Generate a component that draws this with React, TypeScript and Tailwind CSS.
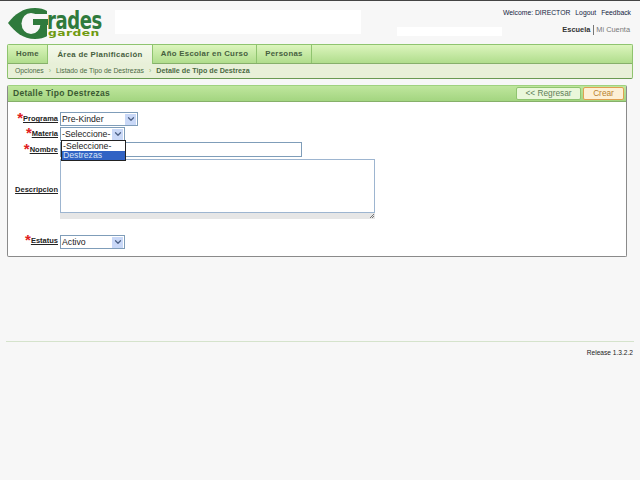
import { ChevronDown } from 'lucide-react'

const tabs = [
  { label: 'Home', active: false, width: 'w-[40px]' },
  { label: 'Área de Planificación', active: true, width: 'w-[105px]' },
  { label: 'Año Escolar en Curso', active: false, width: 'w-[104px]' },
  { label: 'Personas', active: false, width: 'w-[55px]' },
]

const fontTahoma = "font-['Liberation_Sans',Arial,sans-serif]"

function Logo() {
  return (
    <div className="relative w-[105px] h-[34px] ml-2 mt-[7px] shrink-0">
      <svg width="42" height="32" viewBox="0 0 42 32" className="absolute left-0 top-0">
        <path d="M0 15 C7 6 15 0 27 0 C32 0 36 1 39 3 L39 28 C36 30 32 31 27 31 C15 31 7 24 0 15 Z" fill="#2f7a3c" />
        <ellipse cx="23" cy="15.5" rx="9.5" ry="10.5" fill="#f7f7f7" />
        <rect x="23" y="6" width="19" height="5" fill="#f7f7f7" />
        <path d="M39 28 C37 29 35 29 33 29 L33 17 L25 17 L25 11 L40 11 L40 17 L39 17 Z" fill="#2f7a3c" />
      </svg>
      <span className="absolute left-[39px] top-[1px] font-['DejaVu_Sans',sans-serif] font-bold text-[24px] leading-[24px] tracking-[-0.5px] text-[#2f7a3c] inline-block origin-left scale-x-[0.75]">
        rades
      </span>
      <span className="absolute left-[40px] top-[20px] font-['DejaVu_Sans',sans-serif] font-bold text-[9.5px] leading-[9px] tracking-[0.3px] text-[#6f9a10] inline-block origin-left scale-x-[1.3]">
        garden
      </span>
    </div>
  )
}

function Select({ value, width }: { value: string; width: string }) {
  return (
    <div className={`${width} h-[14px] border border-[#7f9db9] bg-white flex items-center justify-between pl-px pr-px`}>
      <span className="text-[8.7px] leading-none text-[#222] whitespace-nowrap">{value}</span>
      <span className="w-[11px] h-[11px] bg-[#c9d8f7] flex items-center justify-center">
        <ChevronDown size={10} strokeWidth={3} className="text-[#4d6185]" />
      </span>
    </div>
  )
}

function FieldLabel({ text, required = false }: { text: string; required?: boolean }) {
  return (
    <div className="flex items-center justify-end h-full pr-[2px]">
      {required && <span className="text-[15px] leading-[10px] font-bold text-[#e02020] mt-[-2px]">*</span>}
      <span className="text-[7.5px] leading-none font-bold underline text-[#222] whitespace-nowrap">{text}</span>
    </div>
  )
}

export default function App() {
  return (
    <div className={`w-[640px] h-[480px] overflow-hidden bg-[#f7f7f7] border-t border-[#444] ${fontTahoma}`}>
      {/* Header */}
      <div className="flex h-[43px]">
        <Logo />
        <div className="w-[246px] h-[24px] bg-white mt-[9px] ml-[2px] shrink-0" />
        <div className="w-[105px] h-[9px] bg-white mt-[26px] ml-[36px] shrink-0" />
        <div className="flex-1 flex flex-col items-end pr-[9px] pt-[7px]">
          <div className="flex gap-[5px] text-[6.8px] leading-[9px] text-[#15233f] whitespace-nowrap">
            <span>Welcome: DIRECTOR</span>
            <span>Logout</span>
            <span>Feedback</span>
          </div>
          <div className="flex items-center mt-[8px] pr-px text-[7.4px] leading-[10px] font-bold whitespace-nowrap">
            <span className="text-[#333]">Escuela</span>
            <span className="font-normal text-[#777] border-l border-[#777] ml-[3px] pl-[2px]">Mi Cuenta</span>
          </div>
        </div>
      </div>

      {/* Main nav */}
      <div className="mx-[7px] h-[35px] border border-[#8fc46f] border-b-[#6a9a52] rounded-[2px] overflow-hidden bg-[#e8f0d8]">
        <div className="flex h-[19px] border-b border-[#86b06a] bg-gradient-to-b from-[#dcf5bd] to-[#b0dd8c]">
          {tabs.map((tab) => (
            <div
              key={tab.label}
              className={`${tab.width} flex items-center justify-center border-r border-[#8fc46f] font-bold text-[7.8px] tracking-[0.3px] text-[#46603e] whitespace-nowrap ${tab.active ? 'bg-gradient-to-b from-[#f4f9ec] to-[#e8f0d8] h-[19px]' : ''}`}
            >
              {tab.label}
            </div>
          ))}
        </div>
        <div className="flex items-center h-[14px] pl-[7px] text-[6.8px] text-[#4c6a44] whitespace-nowrap">
          <span>Opciones</span>
          <span className="mx-[5px] text-[#8fb47a]">›</span>
          <span>Listado de Tipo de Destrezas</span>
          <span className="mx-[5px] text-[#8fb47a]">›</span>
          <span className="font-bold text-[7.2px]">Detalle de Tipo de Destreza</span>
        </div>
      </div>

      {/* Detail panel */}
      <div className="relative mx-[7px] mr-[13px] mt-[6px] h-[172px] border border-[#8a8a8a] border-t-[#9fd27f] rounded-[2px] bg-white">
        <div className="flex items-center justify-between h-[16px] border-b border-[#86b06a] bg-gradient-to-b from-[#bfe69d] to-[#a3d580] pl-[5px] pr-[2px]">
          <span className="font-bold text-[8.5px] tracking-[0.3px] text-[#3a5a32] whitespace-nowrap">Detalle Tipo Destrezas</span>
          <div className="flex gap-[2px]">
            <div className="w-[65px] h-[13px] border border-[#8fc46f] rounded-[2px] bg-[#eaf7da] flex items-center justify-center text-[8.3px] text-[#5f7f58] whitespace-nowrap">
              &lt;&lt; Regresar
            </div>
            <div className="w-[41px] h-[13px] border border-[#e0a050] rounded-[2px] bg-[#fdf0d5] flex items-center justify-center text-[8.3px] text-[#b8812f]">
              Crear
            </div>
          </div>
        </div>

        <div className="grid grid-cols-[52px_1fr] gap-y-px pt-[10px] relative">
          <div className="h-[14px]"><FieldLabel text="Programa" required /></div>
          <Select value="Pre-Kinder" width="w-[78px]" />

          <div className="h-[14px]"><FieldLabel text="Materia" required /></div>
          <Select value="-Seleccione-" width="w-[65px]" />

          <div className="h-[15px]"><FieldLabel text="Nombre" required /></div>
          <div className="w-[242px] h-[15px] border border-[#7f9db9] bg-white" />

          <div className="h-[60px] mt-[2px]">
            <FieldLabel text="Descripcion" />
          </div>
          <div className="mt-px">
            <div className="w-[315px] h-[54px] border border-[#9db5d0] bg-white" />
            <div className="relative w-[315px] h-[6px] bg-[#e6e6e6]">
              <svg width="6" height="6" viewBox="0 0 6 6" className="absolute right-0 bottom-0">
                <path d="M1 5 L5 1 M3 5 L5 3" stroke="#777" strokeWidth="1" />
              </svg>
            </div>
          </div>

          <div className="h-[14px] mt-[13px]"><FieldLabel text="Estatus" required /></div>
          <div className="mt-[14px]"><Select value="Activo" width="w-[65px]" /></div>

          {/* open dropdown */}
          <div className="absolute left-[53px] top-[38px] w-[65px] h-[21px] border border-[#222] bg-white z-10 text-[8.7px] leading-[10px] text-[#222] whitespace-nowrap">
            <div className="h-[10px] pl-[1px]">-Seleccione-</div>
            <div className="h-[9px] pl-[1px] leading-[9px] bg-[#3163c4] text-[#d8e2f5]">Destrezas</div>
          </div>
        </div>
      </div>

      {/* Footer */}
      <div className="mx-[6px] mt-[84px] border-t border-[#d5e3cc] flex justify-end pt-[6px] pr-[1px]">
        <span className="text-[6.6px] leading-[10px] text-[#222] whitespace-nowrap">Release 1.3.2.2</span>
      </div>
    </div>
  )
}
